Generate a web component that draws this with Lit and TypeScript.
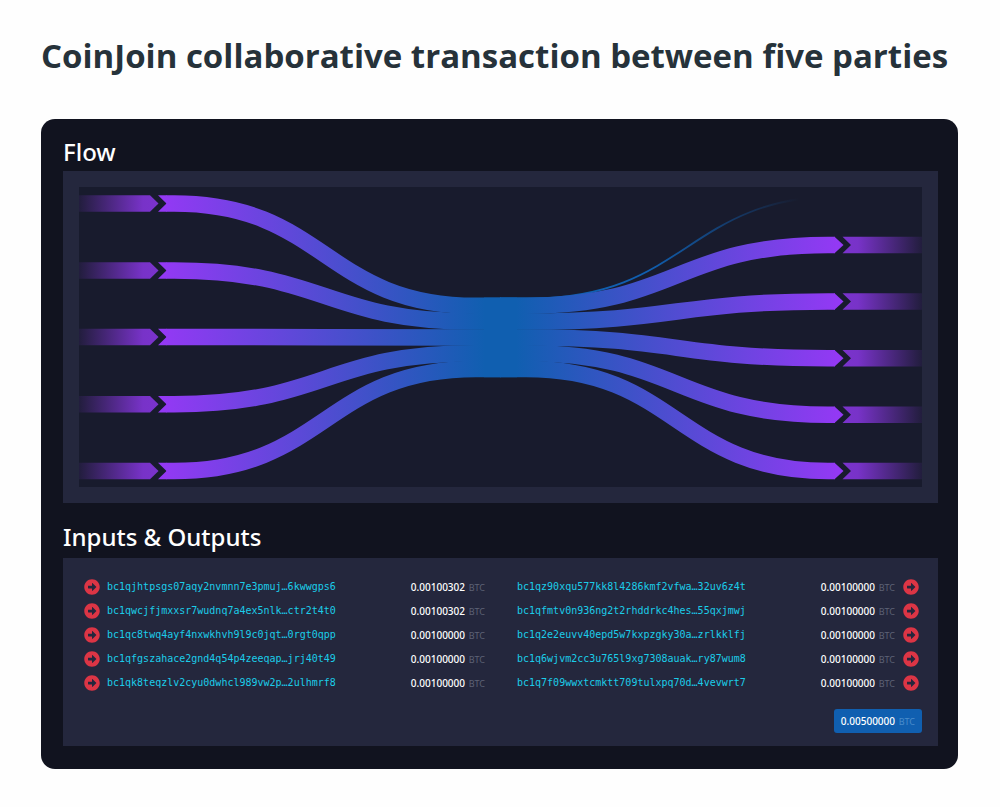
import { LitElement, html, svg, css } from "lit";
import { customElement } from "lit/decorators.js";

interface Entry {
  address: string;
  amount: string;
}

const INPUTS: Entry[] = [
  { address: "bc1qjhtpsgs07aqy2nvmnn7e3pmuj…6kwwgps6", amount: "0.00100302" },
  { address: "bc1qwcjfjmxxsr7wudnq7a4ex5nlk…ctr2t4t0", amount: "0.00100302" },
  { address: "bc1qc8twq4ayf4nxwkhvh9l9c0jqt…0rgt0qpp", amount: "0.00100000" },
  { address: "bc1qfgszahace2gnd4q54p4zeeqap…jrj40t49", amount: "0.00100000" },
  { address: "bc1qk8teqzlv2cyu0dwhcl989vw2p…2ulhmrf8", amount: "0.00100000" },
];

const OUTPUTS: Entry[] = [
  { address: "bc1qz90xqu577kk8l4286kmf2vfwa…32uv6z4t", amount: "0.00100000" },
  { address: "bc1qfmtv0n936ng2t2rhddrkc4hes…55qxjmwj", amount: "0.00100000" },
  { address: "bc1q2e2euvv40epd5w7kxpzgky30a…zrlkklfj", amount: "0.00100000" },
  { address: "bc1q6wjvm2cc3u765l9xg7308auak…ry87wum8", amount: "0.00100000" },
  { address: "bc1q7f09wwxtcmktt709tulxpq70d…4vevwrt7", amount: "0.00100000" },
];

/** Half the thickness of a strand, in viewBox units. */
const HALF = 8.25;

@customElement("tx-flow")
export class TxFlow extends LitElement {
  static styles = css`
    :host { display: block; background: #181b2d; }
    svg { display: block; width: 100%; height: auto; }
    .strand { fill: none; stroke-width: 16.5; }
    .fee { fill: none; stroke-width: 1.8; stroke: url(#fee); }
    .in { stroke: url(#in); }
    .out { stroke: url(#out); }
    .cap { fill: #9339f4; }
    .core { fill: #105fb0; }
  `;

  private inlet(outer: number, inner: number) {
    const top = outer - HALF;
    const bottom = outer + HALF;
    return svg`
      <path fill="url(#lead-in)" d="M0 ${top}H71L79.5 ${outer}L71 ${bottom}H0Z"></path>
      <path class="cap" d="M79 ${top}H88V${bottom}H79L87.5 ${outer}Z"></path>
      <path class="strand in" d="M87.5 ${outer}H95C246 ${outer} 246 ${inner} 397 ${inner}H422"></path>`;
  }

  private outlet(outer: number, inner: number) {
    const top = outer - HALF;
    const bottom = outer + HALF;
    return svg`
      <path class="strand out" d="M756 ${outer}H749C598 ${outer} 598 ${inner} 447 ${inner}H421"></path>
      <path class="cap" d="M755.5 ${top}L764.5 ${outer}L755.5 ${bottom}Z"></path>
      <path fill="url(#lead-out)" d="M763.5 ${top}H843V${bottom}H763.5L772 ${outer}Z"></path>`;
  }

  render() {
    const inner = [118.8, 134.6, 150.4, 166.2, 182];
    const left = [16.5, 83.5, 150, 217.2, 284];
    const right = [58, 114.5, 171.2, 227.7, 284];
    return html`
      <svg viewBox="0 0 843 300" role="img" aria-label="Transaction flow">
        <defs>
          <linearGradient id="in" gradientUnits="userSpaceOnUse" x1="84" y1="0" x2="406" y2="0">
            <stop offset="0" stop-color="#9339f4"></stop>
            <stop offset="1" stop-color="#105fb0"></stop>
          </linearGradient>
          <linearGradient id="out" gradientUnits="userSpaceOnUse" x1="437" y1="0" x2="759" y2="0">
            <stop offset="0" stop-color="#105fb0"></stop>
            <stop offset="1" stop-color="#9339f4"></stop>
          </linearGradient>
          <linearGradient id="fee" gradientUnits="userSpaceOnUse" x1="421" y1="0" x2="720" y2="0">
            <stop offset="0" stop-color="#105fb0"></stop>
            <stop offset="0.5" stop-color="#105fb0"></stop>
            <stop offset="1" stop-color="#105fb0" stop-opacity="0"></stop>
          </linearGradient>
          <linearGradient id="lead-in" gradientUnits="userSpaceOnUse" x1="0" y1="0" x2="80" y2="0">
            <stop offset="0" stop-color="#9339f4" stop-opacity="0.08"></stop>
            <stop offset="0.8" stop-color="#9339f4" stop-opacity="0.78"></stop>
            <stop offset="1" stop-color="#9339f4" stop-opacity="0.8"></stop>
          </linearGradient>
          <linearGradient id="lead-out" gradientUnits="userSpaceOnUse" x1="763" y1="0" x2="843" y2="0">
            <stop offset="0" stop-color="#9339f4" stop-opacity="0.8"></stop>
            <stop offset="0.2" stop-color="#9339f4" stop-opacity="0.78"></stop>
            <stop offset="1" stop-color="#9339f4" stop-opacity="0.08"></stop>
          </linearGradient>
        </defs>
        <path class="fee" d="M764 9C608 9 608 111.300 452 111.300H421"></path>
        ${left.map((y, i) => this.inlet(y, inner[i]))}
        ${right.map((y, i) => this.outlet(y, inner[i]))}
        <rect class="core" x="405" y="110.6" width="33" height="79.6"></rect>
      </svg>`;
  }
}

@customElement("app-root")
export class AppRoot extends LitElement {
  static styles = css`
    :host {
      display: block;
      box-sizing: border-box;
      padding: 32px 42px 38px 41px;
      background: #fefefe;
      font-family: "Noto Sans", "Open Sans", sans-serif;
      color: #fff;
    }
    h1 {
      margin: 0 0 39px;
      font-family: "Open Sans", "Noto Sans", sans-serif;
      font-size: 33px;
      line-height: 48px;
      font-weight: 700;
      color: #26323a;
    }
    .card {
      padding: 17px 20px 23px 22px;
      border-radius: 14px;
      background: #11131f;
    }
    h2 {
      margin: 0 0 3px;
      font-size: 24px;
      line-height: 32px;
      font-weight: 500;
    }
    .panel { background: #24273d; padding: 16px; }
    .panel + h2 { margin: 18px 0 5px; }
    .lists { padding: 17px 16px 13px; }
    .tables {
      display: grid;
      grid-template-columns: 1fr 1fr;
      gap: 32px;
      padding: 0 3px 0 4px;
    }
    table { width: 100%; border-collapse: collapse; }
    td { padding: 0; height: 24px; font-size: 10px; line-height: 24px; }
    .mark { width: 24px; }
    .mark a { display: flex; padding-left: 1px; }
    .mark.end a { justify-content: flex-end; padding-left: 0; }
    .icon { width: 16px; height: 16px; fill: #dc3545; }
    .address { font-family: "DejaVu Sans Mono", monospace; }
    .address a { color: #1bcde9; text-decoration: none; }
    .amount { text-align: right; white-space: nowrap; font-weight: 500; }
    .unit { margin-left: 1px; font-size: 9px; line-height: 12px; font-weight: 400; color: #5d6275; }
    .footer { display: flex; justify-content: flex-end; margin-top: 14px; }
    button {
      height: 24px;
      padding: 0 7px;
      border: 0;
      border-radius: 3px;
      background: #105fb0;
      color: #fff;
      font-family: inherit;
      font-size: 10px;
      font-weight: 500;
    }
    button .unit { color: #4a8ccb; }
  `;

  private mark(end: boolean) {
    return html`<td class="mark ${end ? "end" : ""}">
      <a href="#" aria-label="Show transaction">
        <svg class="icon" viewBox="0 0 512 512">
          <path d="M256 8c137 0 248 111 248 248S393 504 256 504 8 393 8 256 119 8 256 8zM140 300h116v70.900c0 10.700 13 16.100 20.500 8.500l114.300-114.900c4.700-4.700 4.700-12.200 0-16.900l-114.300-115c-7.600-7.600-20.500-2.200-20.500 8.500V212H140c-6.600 0-12 5.400-12 12v64c0 6.600 5.400 12 12 12z"></path>
        </svg>
      </a>
    </td>`;
  }

  private list(entries: Entry[], end: boolean) {
    return html`<table aria-label=${end ? "Outputs" : "Inputs"}>
      <tbody>
        ${entries.map(
          (e) => html`<tr>
            ${end ? "" : this.mark(false)}
            <td class="address"><a href="#">${e.address}</a></td>
            <td class="amount">${e.amount} <span class="unit">BTC</span></td>
            ${end ? this.mark(true) : ""}
          </tr>`
        )}
      </tbody>
    </table>`;
  }

  render() {
    return html`
      <h1>CoinJoin collaborative transaction between five parties</h1>
      <main class="card">
        <h2>Flow</h2>
        <section class="panel"><tx-flow></tx-flow></section>
        <h2>Inputs &amp; Outputs</h2>
        <section class="panel lists">
          <div class="tables">${this.list(INPUTS, false)} ${this.list(OUTPUTS, true)}</div>
          <div class="footer">
            <button type="button">0.00500000 <span class="unit">BTC</span></button>
          </div>
        </section>
      </main>`;
  }
}
